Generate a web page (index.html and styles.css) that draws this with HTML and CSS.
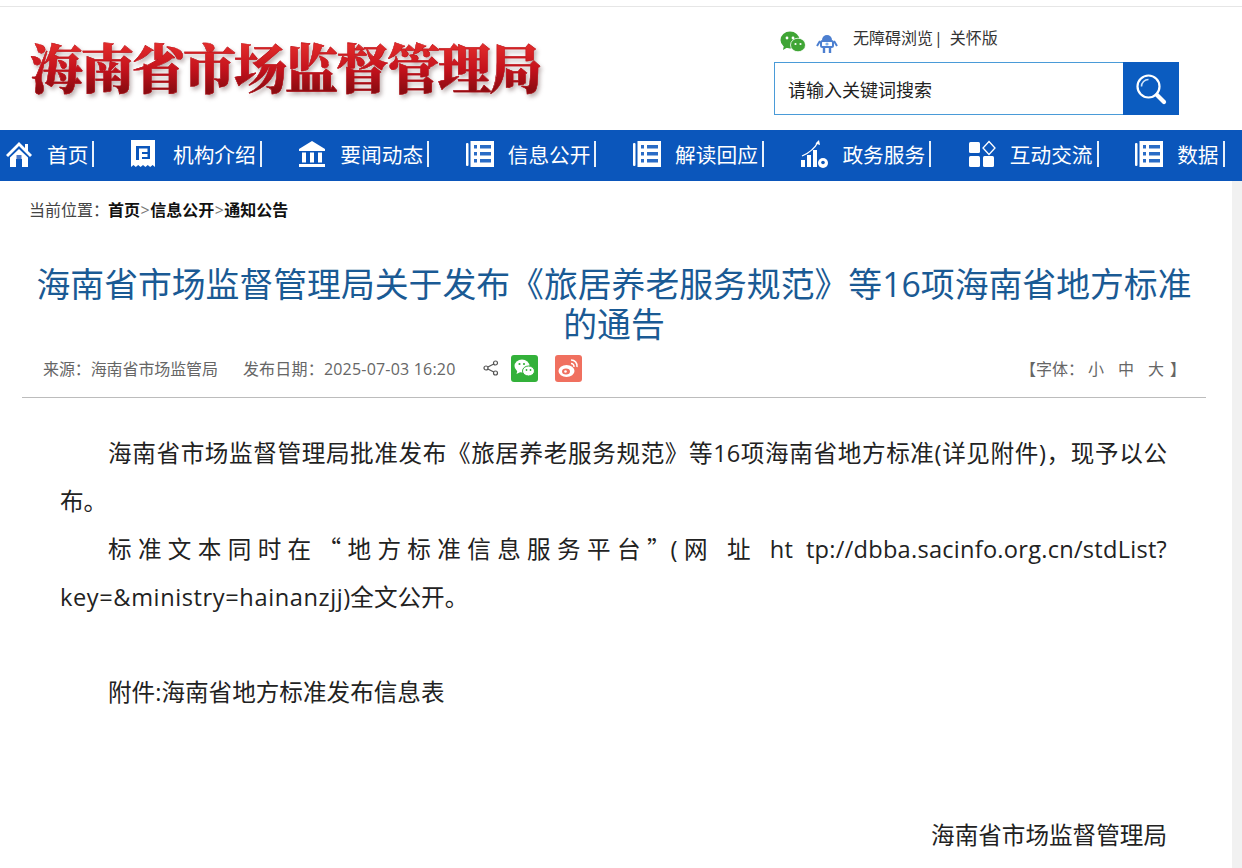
FILE: index.html
```html
<!DOCTYPE html>
<html lang="zh-CN">
<head>
<meta charset="utf-8">
<title>海南省市场监督管理局</title>
<link rel="stylesheet" href="styles.css">
</head>
<body>
<div class="topline"></div>
<header class="header">
  <div class="logo">海南省市场监督管理局</div>
  <div class="tools">
    <div class="tool-links">
      <svg class="ic-wechat" viewBox="0 0 26 22" width="26" height="22"><ellipse cx="10" cy="9" rx="9.500" ry="8.500" fill="#3fa535"/><path d="M4 14l-1 5 5-3z" fill="#3fa535"/><ellipse cx="18" cy="14" rx="7.500" ry="6.800" fill="#3fa535" stroke="#fff" stroke-width=".8"/><circle cx="7" cy="7" r="1.400" fill="#fff"/><circle cx="13" cy="7" r="1.400" fill="#fff"/><circle cx="15.500" cy="13" r="1.100" fill="#fff"/><circle cx="20.500" cy="13" r="1.100" fill="#fff"/></svg>
      <svg class="ic-robot" viewBox="0 0 22 22" width="22" height="22"><path d="M6 8a5 5 0 0 1 10 0z" fill="#4c7fd0"/><rect x="5" y="9" width="12" height="6" rx="1.500" fill="none" stroke="#4c7fd0" stroke-width="2"/><path d="M4 9l-3 5M18 9l3 5" stroke="#4c7fd0" stroke-width="2" fill="none"/><path d="M8 15v6M14 15v6" stroke="#4c7fd0" stroke-width="2.400"/><circle cx="11" cy="12" r="1.600" fill="#7fb0ea"/></svg>
      <span class="tool-text">无障碍浏览</span><span class="tool-bar">|</span><span class="tool-text2">关怀版</span>
    </div>
    <div class="search">
      <div class="search-input">请输入关键词搜索</div>
      <div class="search-btn">
        <svg viewBox="0 0 34 34" width="34" height="34"><circle cx="14.500" cy="14.500" r="11" fill="none" stroke="#fff" stroke-width="2.200"/><path d="M7.500 14.500a7 7 0 0 1 7-7" fill="none" stroke="#cfe4fa" stroke-width="1.600"/><path d="M23 23l7 7" stroke="#fff" stroke-width="4.200" stroke-linecap="round"/></svg>
      </div>
    </div>
  </div>
</header>
<nav class="nav">
  <a class="nav-item">
    <svg class="nav-ic" viewBox="0 0 28 28"><path d="M14 2L1 15l2 2L14 6l11 11 2-2-4-4V4h-3v4z" fill="#fff"/><path d="M5 17.500L14 9l9 8.500V27h-6v-8h-6v8H5z" fill="#fff"/><rect x="11.500" y="15" width="5" height="4" fill="#4a78c8"/></svg>
    <span class="nav-label">首页</span>
  </a>
  <a class="nav-item">
    <svg class="nav-ic" viewBox="0 0 28 28"><path d="M0 0h24v27l-2.400-2-2.400 2-2.400-2-2.400 2-2.400-2-2.400 2-2.400-2-2.400 2-2.300-2L0 27z" fill="#fff"/><path d="M5 6h14v2.500H5zM5 6h3v14H5zM11 12h8v2h-8zM11 17h8v2h-8zM16.500 6H19v13h-2.500z" fill="#0b56bb"/></svg>
    <span class="nav-label">机构介绍</span>
  </a>
  <a class="nav-item">
    <svg class="nav-ic" viewBox="0 0 28 28"><path d="M14 1L1 9v2h26V9z" fill="#fff"/><rect x="4" y="12.500" width="4" height="10" fill="#fff"/><rect x="12" y="12.500" width="4" height="10" fill="#fff"/><rect x="20" y="12.500" width="4" height="10" fill="#fff"/><rect x="1" y="24" width="26" height="3" fill="#fff"/></svg>
    <span class="nav-label">要闻动态</span>
  </a>
  <a class="nav-item">
    <svg class="nav-ic" viewBox="0 0 28 28"><use href="#doc"/></svg>
    <span class="nav-label">信息公开</span>
  </a>
  <a class="nav-item">
    <svg class="nav-ic" viewBox="0 0 28 28"><use href="#doc"/></svg>
    <span class="nav-label">解读回应</span>
  </a>
  <a class="nav-item">
    <svg class="nav-ic" viewBox="0 0 28 28"><path d="M1 20h4v7H1zM7 15h4v12H7zM13 10h4v17h-4z" fill="#fff"/><path d="M2 16C9 13 15 8 18 2" fill="none" stroke="#fff" stroke-width="1.300"/><path d="M15.500 3.500L19 0l1 5z" fill="#fff"/><circle cx="23" cy="23" r="5" fill="#fff"/><circle cx="23" cy="22.500" r="1.800" fill="#0b56bb"/></svg>
    <span class="nav-label">政务服务</span>
  </a>
  <a class="nav-item">
    <svg class="nav-ic" viewBox="0 0 28 28"><rect x="1" y="2" width="11" height="11" rx="1.500" fill="#fff"/><path d="M21 1.500l6 6.500-6 6.500-6-6.500z" fill="none" stroke="#fff" stroke-width="1.300"/><rect x="1" y="16" width="11" height="11" rx="1.500" fill="#fff"/><rect x="15" y="16" width="11" height="11" rx="1.500" fill="#fff"/></svg>
    <span class="nav-label">互动交流</span>
  </a>
  <a class="nav-item">
    <svg class="nav-ic" viewBox="0 0 28 28"><use href="#doc"/></svg>
    <span class="nav-label">数据</span>
  </a>
</nav>
<svg class="defs" width="0" height="0"><defs><g id="doc"><rect x="0" y="3" width="2.500" height="23" rx="1" fill="#fff"/><path d="M4.500 1H28v26H4.500z" fill="#fff"/><path d="M8 5h3v3.500H8zM14 5h11v3.500H14zM8 12h3v3.500H8zM14 12h11v3.500H14zM8 19h3v3.500H8zM14 19h11v3.500H14z" fill="#2a6cc6"/></g></defs></svg>
<div class="content">
<main class="page">
  <div class="crumbs"><span class="crumbs-lead">当前位置&#xFF1A;</span><b>首页</b><span class="crumbs-sep">&gt;</span><b>信息公开</b><span class="crumbs-sep">&gt;</span><b>通知公告</b></div>
  <h1 class="title">海南省市场监督管理局关于发布《旅居养老服务规范》等16项海南省地方标准的通告</h1>
  <div class="meta">
    <span class="meta-source">来源&#xFF1A;海南省市场监管局</span>
    <span class="meta-date">发布日期&#xFF1A;2025-07-03 16:20</span>
    <svg class="ic-share" viewBox="0 0 16 16" width="16" height="16"><circle cx="12.500" cy="3" r="2" fill="none" stroke="#555" stroke-width="1.200"/><circle cx="3" cy="8" r="2" fill="none" stroke="#555" stroke-width="1.200"/><circle cx="12.500" cy="13" r="2" fill="none" stroke="#555" stroke-width="1.200"/><path d="M4.800 7l6-3M4.800 9l6 3" stroke="#555" stroke-width="1.200"/></svg>
    <span class="share share-wx"><svg viewBox="0 0 27 27" width="27" height="27"><ellipse cx="11" cy="11" rx="7.500" ry="6.500" fill="#fff"/><path d="M6.500 15l-1 4 4-2z" fill="#fff"/><ellipse cx="17.500" cy="16" rx="6" ry="5" fill="#fff" stroke="#33b13a"/><circle cx="8.500" cy="9" r="1.100" fill="#33b13a"/><circle cx="13" cy="9" r="1.100" fill="#33b13a"/><circle cx="15.500" cy="15" r=".9" fill="#33b13a"/><circle cx="19.500" cy="15" r=".9" fill="#33b13a"/></svg></span>
    <span class="share share-wb"><svg viewBox="0 0 27 27" width="27" height="27"><ellipse cx="11.500" cy="16" rx="8" ry="6" fill="#fff"/><ellipse cx="11" cy="16.500" rx="4" ry="3" fill="#f0705f"/><circle cx="10.500" cy="16.500" r="1.300" fill="#fff"/><path d="M16 5a6 6 0 0 1 6 7" fill="none" stroke="#fff" stroke-width="1.600"/><path d="M16 8.500a3 3 0 0 1 3 3.500" fill="none" stroke="#fff" stroke-width="1.400"/></svg></span>
    <span class="meta-font">【字体&#xFF1A;<span class="fs fs-first">小</span><span class="fs">中</span><span class="fs">大</span><span class="fs-end">】</span></span>
  </div>
  <article class="article">
    <p>海南省市场监督管理局批准发布《旅居养老服务规范》等16项海南省地方标准(详见附件)&#xFF0C;现予以公布。</p>
    <p>标准文本同时在<span class="cjk">&#x201C;</span>地方标准信息服务平台<span class="cjk">&#x201D;</span><span class="url-a">(网 址 ht tp://dbba.sacinfo.org.cn/stdList?</span><span class="url-b">key=&amp;ministry=hainanzjj</span>)全文公开。</p>
    <p class="blank">&nbsp;</p>
    <p>附件:海南省地方标准发布信息表</p>
    <p class="blank">&nbsp;</p>
    <p class="blank">&nbsp;</p>
    <p class="sign">海南省市场监督管理局</p>
  </article>
</main>
</div>
</body>
</html>
```
FILE: styles.css
```css
* { box-sizing: border-box; }
html, body { margin: 0; height: 868px; overflow: hidden; }
body { font-family: "Open Sans", "Noto Sans CJK SC", sans-serif; background: #fff; color: #222; }
.topline { height: 7px; border-bottom: 1px solid #e6e6e6; }
.header { height: 123px; display: flex; justify-content: space-between; }
.logo { margin: 25px 0 0 30px; height: 68px; font-family: "Noto Serif CJK SC", "Noto Sans CJK SC", serif; font-size: 53px; line-height: 68px; letter-spacing: -2px; font-weight: 900; white-space: nowrap; color: transparent; background: linear-gradient(180deg, #e02a2a 20%, #c4121c 55%, #8e0c12 85%); -webkit-background-clip: text; background-clip: text; -webkit-text-stroke: .4px #b81018; filter: drop-shadow(2px 3px 2px rgba(110, 85, 85, .45)); }
.tools { width: 405px; margin: 16px 63px 0 0; display: flex; flex-direction: column; }
.tool-links { height: 39px; display: flex; align-items: flex-start; padding: 5px 0 0 6px; }
.ic-wechat { margin-top: 3px; }
.ic-robot { margin: 4px 0 0 10px; }
.tool-text { margin-left: 15px; font-size: 16px; line-height: 20px; color: #333; }
.tool-bar { margin-left: 1px; font-size: 16px; line-height: 20px; color: #333; }
.tool-text2 { margin-left: 7px; font-size: 16px; line-height: 20px; color: #333; }
.search { height: 53px; display: flex; border: 1px solid #4a9bd8; border-right: 0; }
.search-input { flex: 1; padding-left: 13px; font-size: 18px; line-height: 54px; color: #222; }
.search-btn { width: 56px; margin: -1px 0; background: #0b5cc0; display: flex; align-items: center; justify-content: center; }
.nav { height: 51px; background: #0b56bb; display: flex; align-items: center; gap: 36.6px; padding: 0 0 3px 5px; overflow: hidden; white-space: nowrap; }
.nav-item { display: flex; align-items: center; gap: 14px; flex: none; color: #fff; }
.nav-ic { width: 28px; height: 28px; flex: none; }
.nav-label { font-size: 20.7px; line-height: 24px; padding: 2px 4px 0 0; border-right: 2px solid #e8f0fa; }
.defs { position: absolute; }
.content { background: #f1f1f1; height: 687px; }
.page { width: 1232px; height: 100%; background: #fff; padding: 0 26px 0 22px; }
.crumbs { padding: 18px 0 0 7px; height: 48px; font-size: 16px; line-height: 22px; color: #444; }
.crumbs b { color: #111; }
.crumbs-lead { margin-right: -1px; }
.crumbs-sep { margin: 0 .5px; color: #777; }
.title { margin: 35px 0 0; padding: 0 10px; font-size: 33.85px; line-height: 40px; font-weight: 400; text-align: center; color: #1a5a94; }
.meta { height: 57px; margin-top: -3px; padding: 0 20px 2px 21px; display: flex; align-items: center; border-bottom: 1px solid #bcbcbc; font-size: 16px; color: #666; }
.meta-source { letter-spacing: -.1px; }
.meta-date { margin-left: 25px; letter-spacing: .2px; }
.ic-share { margin-left: 27px; }
.share { width: 27px; height: 27px; margin-left: 12px; border-radius: 3px; display: block; }
.share svg { display: block; }
.share-wx { background: #33b13a; }
.share-wb { background: #f0705f; margin-left: 17px; }
.meta-font { margin-left: auto; }
.fs { margin-left: 14px; }
.fs-first { margin-left: 4px; }
.fs-end { margin-left: 6px; }
.article { padding: 32px 39px 0 38px; font-size: 23.6px; line-height: 47.6px; color: #222; }
.article p { margin: 0; text-indent: 48px; text-align: justify; }
.article .sign { text-align: right; }
.cjk { font-family: "Noto Sans CJK SC", sans-serif; }
.url-a { letter-spacing: .25px; }
.url-b { letter-spacing: .6px; }
```
